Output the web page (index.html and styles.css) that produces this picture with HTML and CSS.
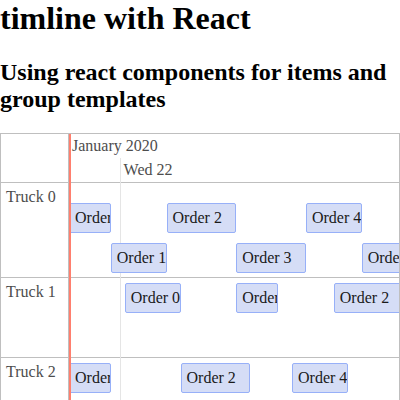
FILE: index.html
```html
<!DOCTYPE html>
<html lang="en">
<head>
<meta charset="utf-8">
<meta name="viewport" content="width=device-width, initial-scale=1">
<title>Timeline</title>
<link rel="stylesheet" href="styles.css">
</head>
<body>
<h1>timline with React</h1>
<h2>Using react components for items and group templates</h2>
<main class="timeline">
  <div class="row axis">
    <div class="label"></div>
    <div class="scale">
      <div class="tick">January 2020</div>
      <div class="tick day">Wed 22</div>
    </div>
  </div>
  <section class="row">
    <div class="label">Truck 0</div>
    <div class="lanes first">
      <div class="item" style="grid-area: 1 / 1 / 2 / 4">Order 0</div>
      <div class="item" style="grid-area: 1 / 8 / 2 / 13">Order 2</div>
      <div class="item" style="grid-area: 1 / 18 / 2 / 22">Order 4</div>
      <div class="item" style="grid-area: 2 / 4 / 3 / 8">Order 1</div>
      <div class="item" style="grid-area: 2 / 13 / 3 / 18">Order 3</div>
      <div class="item" style="grid-area: 2 / 22 / 3 / 26">Order 5</div>
    </div>
  </section>
  <section class="row">
    <div class="label">Truck 1</div>
    <div class="lanes">
      <div class="item" style="grid-area: 1 / 5 / 2 / 9">Order 0</div>
      <div class="item" style="grid-area: 1 / 13 / 2 / 16">Order 1</div>
      <div class="item" style="grid-area: 1 / 20 / 2 / 25">Order 2</div>
    </div>
  </section>
  <section class="row">
    <div class="label">Truck 2</div>
    <div class="lanes">
      <div class="item" style="grid-area: 1 / 1 / 2 / 4">Order 0</div>
      <div class="item" style="grid-area: 1 / 9 / 2 / 14">Order 2</div>
      <div class="item" style="grid-area: 1 / 17 / 2 / 21">Order 4</div>
    </div>
  </section>
  <div class="overlay">
    <div class="midnight"></div>
    <div class="now"></div>
  </div>
</main>
</body>
</html>
```
FILE: styles.css
```css
:root {
  --hour: calc(100% / 23.67);
  --line: #bfbfbf;
}

* {
  box-sizing: border-box;
}

html {
  scrollbar-width: none;
}

body {
  margin: 0;
  font-family: "Liberation Serif", "Times New Roman", serif;
  font-size: 16px;
  line-height: 18px;
  color: #000;
  background: #fff;
}

h1 {
  margin: 0 0 22px;
  font-size: 32px;
  line-height: 37px;
}

h2 {
  margin: 0 0 20px;
  font-size: 24px;
  line-height: 27px;
}

.timeline {
  position: relative;
  border: 1px solid var(--line);
  overflow: hidden;
}

.row {
  display: grid;
  grid-template-columns: 68px 1fr;
  border-bottom: 1px solid var(--line);
}

.label {
  padding: 5px;
  color: #4d4d4d;
  border-right: 1px solid var(--line);
}

.scale {
  color: #4d4d4d;
}

.tick {
  padding: 3px;
}

.day {
  margin-left: calc(var(--hour) * 3.7);
}

.lanes {
  display: grid;
  grid-template-columns: repeat(25, var(--hour));
  grid-auto-rows: 30px;
  row-gap: 10px;
  min-width: 0;
  min-height: 79px;
  padding: 5px 0 4px;
  overflow: hidden;
}

.lanes.first {
  padding-top: 20px;
}

.item {
  position: relative;
  z-index: 1;
  padding: 5px;
  color: #1a1a1a;
  background: #d5ddf6;
  border: 1px solid #97b0f8;
  border-radius: 2px;
  white-space: nowrap;
  overflow: hidden;
}

.overlay {
  position: absolute;
  inset: 0 0 0 68px;
  pointer-events: none;
}

.midnight {
  position: absolute;
  top: 24px;
  bottom: 0;
  left: calc(var(--hour) * 3.66);
  border-left: 1px solid #e5e5e5;
}

.now {
  position: absolute;
  z-index: 2;
  top: 0;
  bottom: 0;
  left: 0;
  width: 2px;
  background: #ff7f6e;
}
```
